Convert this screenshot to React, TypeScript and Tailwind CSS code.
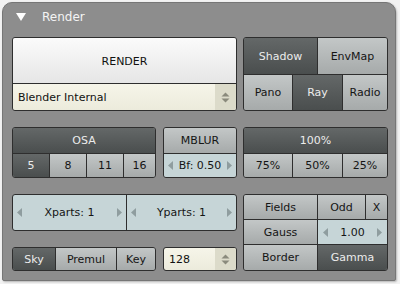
import React from "react";

const dark = "bg-gradient-to-b from-[#646868] to-[#4a4e4e] text-[#ececec]";
const light = "bg-gradient-to-b from-[#c3c7c7] to-[#a6aaaa] text-[#151515]";
const num = "bg-[#c6d5d7] text-[#151515]";

function Btn({ cls, children, w, extra = "" }: { cls: string; children: React.ReactNode; w?: string; extra?: string }) {
  return (
    <div className={`flex items-center justify-center pt-[2px] ${cls} ${w ?? "flex-1"} ${extra}`}>{children}</div>
  );
}

function LArrow() {
  return (
    <svg width="5" height="9" viewBox="0 0 5 9" className="shrink-0">
      <path d="M5 0 L0 4.5 L5 9 Z" fill="#8f9d9f" />
    </svg>
  );
}
function RArrow() {
  return (
    <svg width="5" height="9" viewBox="0 0 5 9" className="shrink-0">
      <path d="M0 0 L5 4.5 L0 9 Z" fill="#8f9d9f" />
    </svg>
  );
}
function UpDown() {
  return (
    <svg width="9" height="11" viewBox="0 0 9 11">
      <path d="M0.5 4.5 L4.5 0.5 L8.5 4.5 Z" fill="#8a8a7c" />
      <path d="M0.5 6.5 L4.5 10.5 L8.5 6.5 Z" fill="#8a8a7c" />
    </svg>
  );
}

export default function App() {
  return (
    <div
      className="w-[400px] h-[284px] bg-[#f2f2f2] pt-[2px] pl-[2px] overflow-hidden text-[11px]"
      style={{ fontFamily: '"DejaVu Sans", sans-serif' }}
    >
      <div className="w-[394px] h-[279px] bg-[#8d8d8d] rounded-t-[10px] rounded-b-[2px] border border-[#767676] shadow-[1px_1px_2px_rgba(0,0,0,0.25)] flex flex-col">
        <div className="h-[27px] flex items-center pl-[13px] shrink-0">
          <svg width="10" height="8" viewBox="0 0 10 8">
            <path d="M0 0 L10 0 L5 8 Z" fill="#ffffff" />
          </svg>
          <span className="ml-[16px] text-[12px] text-[#f4f4f4]">Render</span>
        </div>
        <div className="flex flex-col pl-[9px] pt-[7px]">
          {/* Row 1 */}
          <div className="flex h-[74px] gap-[6px]">
            <div className="w-[225px] flex flex-col border border-[#2e2e2e] rounded-[3px] overflow-hidden">
              <div className="flex-1 flex items-center justify-center pt-[3px] bg-gradient-to-b from-[#fbfbfb] to-[#e6e6e6] text-[#111]">
                RENDER
              </div>
              <div className="h-[27px] flex border-t border-[#2e2e2e] bg-gradient-to-b from-[#f6f5e9] to-[#ecebdc]">
                <div className="flex-1 flex items-center pl-[5px] pt-[2px] text-[#111]">Blender Internal</div>
                <div className="w-[21px] flex items-center justify-center bg-[#dcdbca]">
                  <UpDown />
                </div>
              </div>
            </div>
            <div className="w-[145px] flex flex-col border border-[#2e2e2e] rounded-[3px] overflow-hidden">
              <div className="flex h-[36px]">
                <Btn cls={dark} w="w-[73px]">Shadow</Btn>
                <Btn cls={light} extra="border-l border-[#2e2e2e]">EnvMap</Btn>
              </div>
              <div className="flex flex-1 border-t border-[#2e2e2e]">
                <Btn cls={light} w="w-[48px]">Pano</Btn>
                <Btn cls={dark} w="w-[50px]" extra="border-l border-[#2e2e2e]">Ray</Btn>
                <Btn cls={light} extra="border-l border-[#2e2e2e]">Radio</Btn>
              </div>
            </div>
          </div>
          {/* Row 2 */}
          <div className="flex h-[51px] mt-[16px]">
            <div className="w-[144px] flex flex-col border border-[#2e2e2e] rounded-[3px] overflow-hidden">
              <Btn cls={dark} w="h-[25px]">OSA</Btn>
              <div className="flex flex-1 border-t border-[#2e2e2e]">
                <Btn cls={dark} w="w-[36px]">5</Btn>
                <Btn cls={light} w="w-[37px]" extra="border-l border-[#2e2e2e]">8</Btn>
                <Btn cls={light} w="w-[37px]" extra="border-l border-[#2e2e2e]">11</Btn>
                <Btn cls={light} extra="border-l border-[#2e2e2e]">16</Btn>
              </div>
            </div>
            <div className="w-[74px] ml-[7px] flex flex-col border border-[#2e2e2e] rounded-[3px] overflow-hidden">
              <Btn cls={light} w="h-[25px]">MBLUR</Btn>
              <div className={`flex flex-1 items-center px-[4px] border-t border-[#2e2e2e] ${num}`}>
                <LArrow />
                <span className="flex-1 text-center pt-[2px]">Bf: 0.50</span>
                <RArrow />
              </div>
            </div>
            <div className="w-[145px] ml-[6px] flex flex-col border border-[#2e2e2e] rounded-[3px] overflow-hidden">
              <Btn cls={dark} w="h-[25px]">100%</Btn>
              <div className="flex flex-1 border-t border-[#2e2e2e]">
                <Btn cls={light} w="w-[48px]">75%</Btn>
                <Btn cls={light} w="w-[50px]" extra="border-l border-[#2e2e2e]">50%</Btn>
                <Btn cls={light} extra="border-l border-[#2e2e2e]">25%</Btn>
              </div>
            </div>
          </div>
          {/* Row 3 */}
          <div className="flex mt-[16px] gap-[6px]">
            <div className="w-[225px] flex flex-col">
              <div className={`h-[37px] flex border border-[#2e2e2e] rounded-[3px] overflow-hidden ${num}`}>
                <div className="w-[113px] flex items-center px-[4px]">
                  <LArrow />
                  <span className="flex-1 text-center pt-[2px]">Xparts: 1</span>
                  <RArrow />
                </div>
                <div className="flex-1 flex items-center px-[4px] border-l border-[#2e2e2e]">
                  <LArrow />
                  <span className="flex-1 text-center pt-[2px]">Yparts: 1</span>
                  <RArrow />
                </div>
              </div>
              <div className="flex h-[24px] mt-[16px]">
                <div className="w-[144px] flex border border-[#2e2e2e] rounded-[3px] overflow-hidden">
                  <Btn cls={dark} w="w-[42px]">Sky</Btn>
                  <Btn cls={light} w="w-[61px]" extra="border-l border-[#2e2e2e]">Premul</Btn>
                  <Btn cls={light} extra="border-l border-[#2e2e2e]">Key</Btn>
                </div>
                <div className="w-[74px] ml-[7px] flex border border-[#2e2e2e] rounded-[3px] overflow-hidden bg-gradient-to-b from-[#f6f5e9] to-[#ecebdc]">
                  <div className="flex-1 flex items-center pl-[5px] pt-[2px] text-[#111]">128</div>
                  <div className="w-[21px] flex items-center justify-center bg-[#dcdbca]">
                    <UpDown />
                  </div>
                </div>
              </div>
            </div>
            <div className="w-[145px] h-[77px] flex flex-col border border-[#2e2e2e] rounded-[3px] overflow-hidden">
              <div className="flex h-[24px]">
                <Btn cls={light} w="w-[73px]">Fields</Btn>
                <Btn cls={light} w="w-[48px]" extra="border-l border-[#2e2e2e]">Odd</Btn>
                <Btn cls={light} extra="border-l border-[#2e2e2e]">X</Btn>
              </div>
              <div className="flex h-[25px] border-t border-[#2e2e2e]">
                <Btn cls={light} w="w-[73px]">Gauss</Btn>
                <div className={`flex-1 flex items-center px-[5px] border-l border-[#2e2e2e] ${num}`}>
                  <LArrow />
                  <span className="flex-1 text-center pt-[2px]">1.00</span>
                  <RArrow />
                </div>
              </div>
              <div className="flex flex-1 border-t border-[#2e2e2e]">
                <Btn cls={light} w="w-[73px]">Border</Btn>
                <Btn cls={dark} extra="border-l border-[#2e2e2e]">Gamma</Btn>
              </div>
            </div>
          </div>
        </div>
      </div>
    </div>
  );
}
